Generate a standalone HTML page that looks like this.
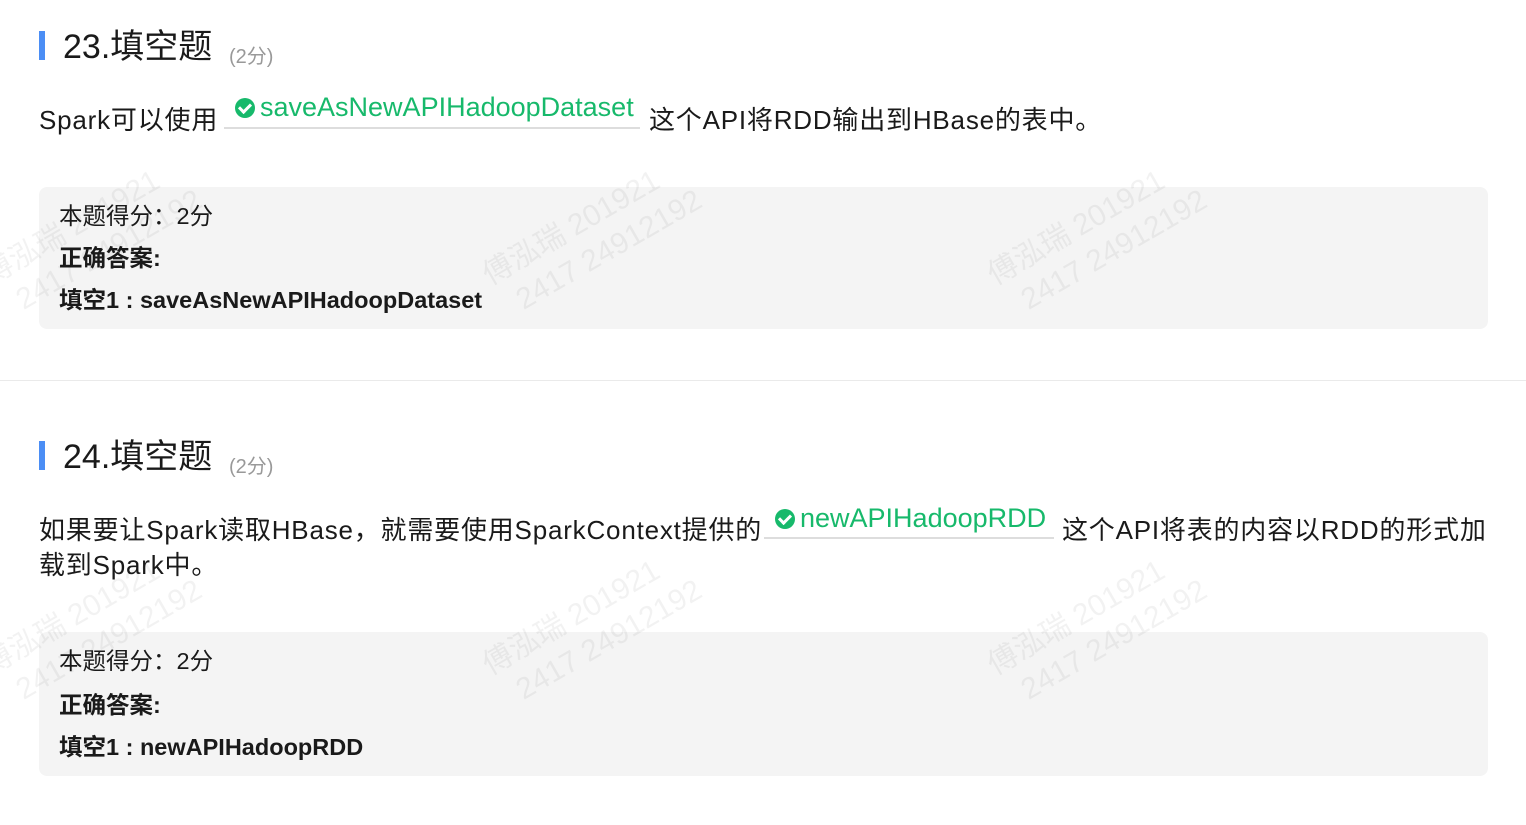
<!DOCTYPE html>
<html><head><meta charset="utf-8"><style>
*{margin:0;padding:0;box-sizing:border-box}
body{width:1526px;height:825px;background:#fff;position:relative;overflow:hidden;font-family:"Liberation Sans","Noto Sans CJK SC",sans-serif;color:#1a1a1a}
.a{position:absolute;white-space:nowrap}
.bar{position:absolute;width:6px;height:29px;background:#4b8ef5;left:39px}
.t{font-size:34px;line-height:40px;color:#1a1a1a}
.s{font-size:20px;color:#999}
.q{font-size:26px;line-height:35px;letter-spacing:0.8px}
.g{color:#17b96b;font-size:27px}
.ul{position:absolute;height:2px;background:#ddd}
.box{position:absolute;left:39px;width:1449px;background:#f4f4f4;border-radius:8px}
.r{font-size:23.5px;line-height:30px}
.b{font-weight:bold}
.chk{display:inline-block;width:20px;height:20px;border-radius:50%;background:#17b96b;vertical-align:-2px;margin-right:5px;position:relative}
.chk:after{content:"";position:absolute;left:6px;top:3px;width:5px;height:9px;border:solid #fff;border-width:0 3px 3px 0;transform:rotate(45deg)}
.wm{position:absolute;color:rgba(0,0,0,0.05);font-size:30px;transform:rotate(-30deg);white-space:nowrap;line-height:38px}
</style></head><body>
<div class="bar" style="top:31px"></div>
<div class="a t" style="left:63px;top:27px">23.填空题</div>
<div class="a s" style="left:229px;top:40px">(2分)</div>
<div class="a q" style="left:39px;top:103px">Spark可以使用</div>
<div class="ul" style="left:224px;top:127px;width:416px"></div>
<div class="a g" style="left:235px;top:92px"><span class="chk"></span>saveAsNewAPIHadoopDataset</div>
<div class="a q" style="left:649px;top:103px">这个API将RDD输出到HBase的表中。</div>
<div class="box" style="top:187px;height:142px"></div>
<div class="a r" style="left:59px;top:201px">本题得分：2分</div>
<div class="a r b" style="left:59px;top:243px">正确答案:</div>
<div class="a r b" style="left:59px;top:285px">填空1 : saveAsNewAPIHadoopDataset</div>
<div style="position:absolute;left:0;top:380px;width:1526px;height:1px;background:#eaeaea"></div>
<div class="bar" style="top:441px"></div>
<div class="a t" style="left:63px;top:437px">24.填空题</div>
<div class="a s" style="left:229px;top:450px">(2分)</div>
<div class="a q" style="left:39px;top:513px">如果要让Spark读取HBase，就需要使用SparkContext提供的</div>
<div class="ul" style="left:764px;top:537px;width:290px"></div>
<div class="a g" style="left:775px;top:503px"><span class="chk"></span>newAPIHadoopRDD</div>
<div class="a q" style="left:1062px;top:513px">这个API将表的内容以RDD的形式加</div>
<div class="a q" style="left:39px;top:548px">载到Spark中。</div>
<div class="box" style="top:632px;height:144px"></div>
<div class="a r" style="left:59px;top:646px">本题得分：2分</div>
<div class="a r b" style="left:59px;top:690px">正确答案:</div>
<div class="a r b" style="left:59px;top:732px">填空1 : newAPIHadoopRDD</div>
<div class="wm" style="left:-20px;top:200px">傅泓瑞 201921<br>&nbsp;&nbsp;2417 24912192</div>
<div class="wm" style="left:480px;top:200px">傅泓瑞 201921<br>&nbsp;&nbsp;2417 24912192</div>
<div class="wm" style="left:985px;top:200px">傅泓瑞 201921<br>&nbsp;&nbsp;2417 24912192</div>
<div class="wm" style="left:-20px;top:590px">傅泓瑞 201921<br>&nbsp;&nbsp;2417 24912192</div>
<div class="wm" style="left:480px;top:590px">傅泓瑞 201921<br>&nbsp;&nbsp;2417 24912192</div>
<div class="wm" style="left:985px;top:590px">傅泓瑞 201921<br>&nbsp;&nbsp;2417 24912192</div>
</body></html>
